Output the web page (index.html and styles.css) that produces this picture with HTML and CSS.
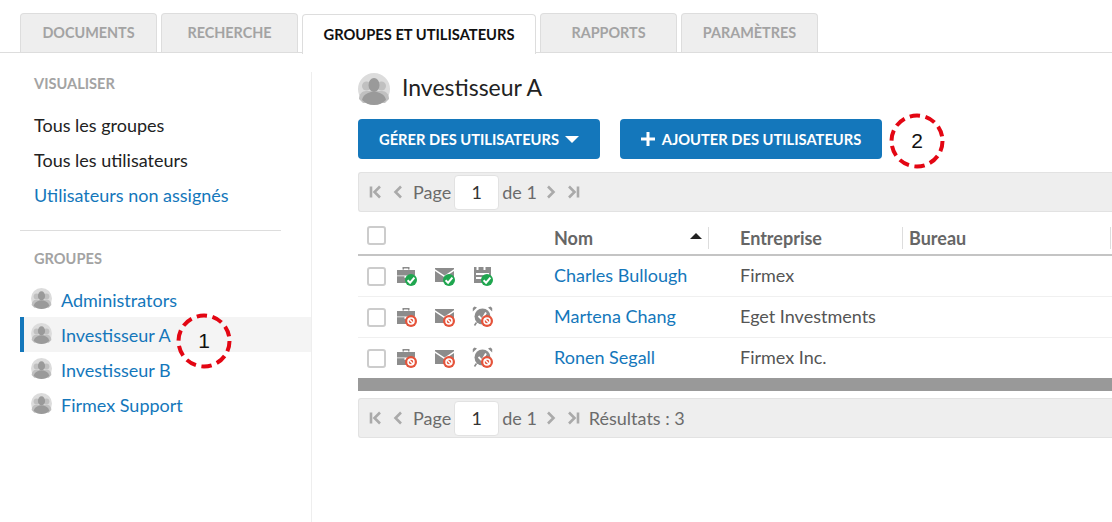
FILE: index.html
```html
<!DOCTYPE html>
<html lang="fr">
<head>
<meta charset="utf-8">
<title>Groupes et utilisateurs</title>
<link rel="stylesheet" href="styles.css">
</head>
<body>
<svg class="defs" width="0" height="0" aria-hidden="true">
  <defs>
    <symbol id="avatar" viewBox="0 0 32 32">
      <circle cx="16" cy="16" r="16" fill="#dcdcdc"/>
      <g fill="#c0c0c0">
        <circle cx="8.5" cy="13" r="4.5"/><circle cx="23.5" cy="13" r="4.5"/>
        <path d="M1 26c0-5 3-8 7-8h16c4 0 7 3 7 8l-4 4H5z"/>
      </g>
      <g fill="#9a9a9a">
        <ellipse cx="16" cy="12" rx="5.5" ry="7"/>
        <path d="M4 27c1-5 5-7 9-8h6c4 1 8 3 9 8-3 3-7 5-12 5s-9-2-12-5z"/>
      </g>
    </symbol>
    <symbol id="briefcase" viewBox="0 0 22 20">
      <path d="M6.500 4.500V2h7v2.500h-1.500V3.400H8v1.100z" fill="#8c8c8c"/>
      <path d="M1 5h18v5.500H1zM1 11.300h7.500v1.700h3v-1.700H19V18H1z" fill="#8c8c8c"/>
    </symbol>
    <symbol id="mail" viewBox="0 0 22 20">
      <path d="M1 3h19v1.200L10.500 10.500 1 4.200zM1 6l9.500 6.200L20 6v11H1z" fill="#8c8c8c"/>
    </symbol>
    <symbol id="calendar" viewBox="0 0 22 20">
      <path d="M2 2h2.500v3h2V2h5v3h2V2H19v16H2zM4 8v2h13V8zM4 12v2h8v-2z" fill="#8c8c8c" fill-rule="evenodd"/>
    </symbol>
    <symbol id="clock" viewBox="0 0 22 20">
      <circle cx="10.500" cy="10.500" r="8" fill="#8c8c8c"/>
      <path d="M.8 5.500 5 1.500 2.500.5.800 2zM20.200 5.500 16 1.500 18.500.5 20.200 2z" fill="#8c8c8c"/>
      <path d="M4.500 16.500 2.500 19.500M16.500 16.500l2 3" stroke="#8c8c8c" stroke-width="1.600"/>
      <path d="M6.500 10l3.500 3.500 4-7" fill="none" stroke="#fff" stroke-width="1.800"/>
    </symbol>
    <symbol id="ok" viewBox="0 0 12 12">
      <circle cx="6" cy="6" r="6" fill="#1fa64f"/>
      <path d="M2.600 6.200l2.500 2.500 4.300-5" fill="none" stroke="#fff" stroke-width="2"/>
    </symbol>
    <symbol id="no" viewBox="0 0 12 12">
      <circle cx="6" cy="6" r="6" fill="#e5533a"/>
      <circle cx="6" cy="6" r="3" fill="none" stroke="#fff" stroke-width="1.500"/>
      <path d="M3.800 3.800l4.400 4.400" stroke="#fff" stroke-width="1.500"/>
    </symbol>
  </defs>
</svg>

<nav class="tabs">
  <a class="tab">DOCUMENTS</a>
  <a class="tab">RECHERCHE</a>
  <a class="tab tab-active">GROUPES ET UTILISATEURS</a>
  <a class="tab">RAPPORTS</a>
  <a class="tab">PARAMÈTRES</a>
</nav>

<div class="layout">
  <aside class="sidebar">
    <h3 class="side-heading">VISUALISER</h3>
    <ul class="view-list">
      <li>Tous les groupes</li>
      <li>Tous les utilisateurs</li>
      <li class="link">Utilisateurs non assignés</li>
    </ul>
    <hr class="side-rule">
    <h3 class="side-heading groups-heading">GROUPES</h3>
    <ul class="group-list">
      <li class="group"><svg class="group-avatar"><use href="#avatar"/></svg>Administrators</li>
      <li class="group group-active"><svg class="group-avatar"><use href="#avatar"/></svg>Investisseur A</li>
      <li class="group"><svg class="group-avatar"><use href="#avatar"/></svg>Investisseur B</li>
      <li class="group"><svg class="group-avatar"><use href="#avatar"/></svg>Firmex Support</li>
    </ul>
  </aside>

  <main class="content">
    <header class="title-row">
      <svg class="title-avatar"><use href="#avatar"/></svg>
      <h1 class="title">Investisseur A</h1>
    </header>
    <div class="actions">
      <button class="btn btn-manage">GÉRER DES UTILISATEURS<span class="caret"></span></button>
      <button class="btn btn-add"><svg class="plus" viewBox="0 0 14 14"><path d="M5.500 0h3v5.500H14v3H8.500V14h-3V8.500H0v-3h5.500z" fill="#fff"/></svg>AJOUTER DES UTILISATEURS</button>
    </div>

    <div class="pager">
      <svg class="pg" viewBox="0 0 14 14"><path d="M2 1.500v11M11 1.500 5.500 7l5.500 5.500" fill="none" stroke="#aaa" stroke-width="2.600"/></svg>
      <svg class="pg" viewBox="0 0 14 14"><path d="M10 1.500 4.500 7l5.500 5.500" fill="none" stroke="#aaa" stroke-width="2.600"/></svg>
      <span class="pg-label">Page</span><span class="pg-input">1</span><span class="pg-of">de 1</span>
      <svg class="pg pg-next" viewBox="0 0 14 14"><path d="M4 1.500 9.500 7 4 12.500" fill="none" stroke="#aaa" stroke-width="2.600"/></svg>
      <svg class="pg" viewBox="0 0 14 14"><path d="M12 1.500v11M3 1.500 8.500 7 3 12.500" fill="none" stroke="#aaa" stroke-width="2.600"/></svg>
    </div>

    <div class="grid-head">
      <div class="cell-check"><span class="check"></span></div>
      <div class="head-cell head-nom">Nom<span class="sort"></span></div>
      <div class="head-cell head-ent">Entreprise</div>
      <div class="head-cell head-bur">Bureau</div>
    </div>

    <div class="row">
      <div class="cell-check"><span class="check"></span></div>
      <div class="status">
        <span class="st"><svg class="st-i"><use href="#briefcase"/></svg><svg class="st-b"><use href="#ok"/></svg></span>
        <span class="st"><svg class="st-i"><use href="#mail"/></svg><svg class="st-b"><use href="#ok"/></svg></span>
        <span class="st"><svg class="st-i"><use href="#calendar"/></svg><svg class="st-b"><use href="#ok"/></svg></span>
      </div>
      <div class="cell-name">Charles Bullough</div>
      <div class="cell-company">Firmex</div>
    </div>
    <div class="row">
      <div class="cell-check"><span class="check"></span></div>
      <div class="status">
        <span class="st"><svg class="st-i"><use href="#briefcase"/></svg><svg class="st-b"><use href="#no"/></svg></span>
        <span class="st"><svg class="st-i"><use href="#mail"/></svg><svg class="st-b"><use href="#no"/></svg></span>
        <span class="st"><svg class="st-i"><use href="#clock"/></svg><svg class="st-b"><use href="#no"/></svg></span>
      </div>
      <div class="cell-name">Martena Chang</div>
      <div class="cell-company">Eget Investments</div>
    </div>
    <div class="row">
      <div class="cell-check"><span class="check"></span></div>
      <div class="status">
        <span class="st"><svg class="st-i"><use href="#briefcase"/></svg><svg class="st-b"><use href="#no"/></svg></span>
        <span class="st"><svg class="st-i"><use href="#mail"/></svg><svg class="st-b"><use href="#no"/></svg></span>
        <span class="st"><svg class="st-i"><use href="#clock"/></svg><svg class="st-b"><use href="#no"/></svg></span>
      </div>
      <div class="cell-name">Ronen Segall</div>
      <div class="cell-company">Firmex Inc.</div>
    </div>
    <div class="scrollbar"></div>

    <div class="pager pager-bottom">
      <svg class="pg" viewBox="0 0 14 14"><path d="M2 1.500v11M11 1.500 5.500 7l5.500 5.500" fill="none" stroke="#aaa" stroke-width="2.600"/></svg>
      <svg class="pg" viewBox="0 0 14 14"><path d="M10 1.500 4.500 7l5.500 5.500" fill="none" stroke="#aaa" stroke-width="2.600"/></svg>
      <span class="pg-label">Page</span><span class="pg-input">1</span><span class="pg-of">de 1</span>
      <svg class="pg pg-next" viewBox="0 0 14 14"><path d="M4 1.500 9.500 7 4 12.500" fill="none" stroke="#aaa" stroke-width="2.600"/></svg>
      <svg class="pg" viewBox="0 0 14 14"><path d="M12 1.500v11M3 1.500 8.500 7 3 12.500" fill="none" stroke="#aaa" stroke-width="2.600"/></svg>
      <span class="pg-results">Résultats : 3</span>
    </div>
  </main>
</div>

<div class="callout callout-1"><svg class="ring" viewBox="0 0 56 56"><circle cx="28" cy="28" r="25.500" fill="none" stroke="#e30613" stroke-width="4" stroke-dasharray="10.500 5.500"/></svg><span>1</span></div>
<div class="callout callout-2"><svg class="ring" viewBox="0 0 56 56"><circle cx="28" cy="28" r="25.500" fill="none" stroke="#e30613" stroke-width="4" stroke-dasharray="10.500 5.500"/></svg><span>2</span></div>
</body>
</html>
```
FILE: styles.css
```css
* { box-sizing: border-box; }
html, body { margin: 0; padding: 0; }
body {
  position: relative;
  width: 1112px;
  height: 522px;
  overflow: hidden;
  background: #fff;
  font-family: Lato, "Liberation Sans", sans-serif;
  font-size: 18px;
  color: #222;
}
ul { list-style: none; margin: 0; padding: 0; }
.defs { position: absolute; }

.tabs {
  display: flex;
  gap: 4px;
  height: 53px;
  padding: 13px 0 0 20px;
  border-bottom: 1px solid #ddd;
}
.tab {
  width: 137px;
  height: 39px;
  padding-bottom: 2px;
  display: flex;
  align-items: center;
  justify-content: center;
  background: #eee;
  border: 1px solid #ddd;
  border-bottom: 0;
  border-radius: 4px 4px 0 0;
  color: #a3a3a3;
  font-size: 14.4px;
  font-weight: 700;
}
.tab-active {
  width: 234px;
  height: 40px;
  margin-top: 1px;
  background: #fff;
  color: #111;
  font-size: 14.7px;
}

.layout { display: flex; }
.sidebar {
  width: 312px;
  height: 450px;
  margin-top: 19px;
  padding-left: 20px;
  border-right: 1px solid #eee;
  flex: none;
}
.side-heading {
  margin: 0;
  padding: 3px 0 0 14px;
  font-size: 14.6px;
  line-height: 18px;
  font-weight: 700;
  color: #a3a3a3;
}
.view-list { margin-top: 15px; padding-left: 14px; }
.view-list li { height: 35px; line-height: 35px; color: #222; }
.view-list .link { color: #1477bb; }
.side-rule {
  width: 261px;
  margin: 17px 0 0;
  border: 0;
  border-top: 1px solid #ddd;
}
.groups-heading { padding-top: 19px; }
.group-list { margin-top: 14px; }
.group {
  height: 35px;
  display: flex;
  align-items: center;
  padding-left: 11px;
  color: #1477bb;
}
.group-active {
  background: #f4f4f4;
  border-left: 4px solid #1477bb;
  padding-left: 7px;
}
.group-avatar { width: 21px; height: 21px; margin-right: 9px; flex: none; margin-top: -3px; }

.content { flex: 1; padding: 20px 0 0 46px; min-width: 0; }
.title-row { display: flex; align-items: center; height: 32px; }
.title-avatar { width: 32px; height: 32px; margin-right: 12px; }
.title { margin: 0; padding-bottom: 4px; font-size: 23px; line-height: 28px; font-weight: 400; color: #222; }
.actions { display: flex; gap: 20px; margin-top: 14px; }
.btn {
  height: 40px;
  padding-bottom: 1px;
  border: 0;
  border-radius: 4px;
  background: #1477bb;
  color: #fff;
  font-family: inherit;
  font-size: 14.7px;
  font-weight: 700;
  display: flex;
  align-items: center;
  justify-content: center;
}
.btn-manage { width: 242px; }
.btn-add { width: 262px; }
.caret {
  margin-left: 6px;
  border-left: 7px solid transparent;
  border-right: 7px solid transparent;
  border-top: 7px solid #fff;
}
.plus { width: 14px; height: 14px; margin-right: 7px; }

.pager {
  display: flex;
  align-items: center;
  height: 40px;
  margin-top: 13px;
  padding-left: 9px;
  background: #eee;
  border: 1px solid #e2e2e2;
  border-right: 0;
  border-radius: 3px 0 0 3px;
  color: #6b6b6b;
}
.pg { width: 16px; height: 14px; flex: none; margin-right: 6px; }
.pg-label { margin-left: 1px; }
.pg-input {
  width: 45px;
  height: 35px;
  margin: 0 3px;
  display: flex;
  align-items: center;
  justify-content: center;
  background: #fff;
  border: 1px solid #e2e2e2;
  border-radius: 4px;
  color: #333;
}
.pg-next { margin-left: 6px; }
.pg-results { margin-left: 2px; }
.pager-bottom { margin-top: 7px; }

.grid-head {
  display: flex;
  align-items: center;
  height: 44px;
  border-bottom: 2px solid #c4c4c4;
}
.cell-check { width: 38px; flex: none; padding-left: 9px; display: flex; }
.check {
  width: 19px;
  height: 19px;
  background: #fff;
  border: 2px solid #ccc;
  border-radius: 3px;
}
.grid-head .check { margin-top: 4px; }
.head-cell {
  height: 22px;
  line-height: 22px;
  font-weight: 700;
  color: #666;
  margin-top: 10px;
  border-right: 1px solid #ddd;
  position: relative;
}
.head-nom { width: 155px; margin-left: 158px; }
.head-ent { width: 194px; padding-left: 31px; }
.head-bur { width: 208px; padding-left: 6px; }
.sort {
  position: absolute;
  right: 6px;
  top: 6px;
  border-left: 6px solid transparent;
  border-right: 6px solid transparent;
  border-bottom: 6px solid #222;
}

.row {
  display: flex;
  align-items: center;
  height: 41px;
  padding-bottom: 2px;
  border-bottom: 1px solid #f0f0f0;
  color: #555;
}
.row .cell-check { margin-top: 2px; }
.status { width: 158px; display: flex; gap: 16px; flex: none; }
.st { position: relative; width: 22px; height: 20px; display: block; }
.st-i { width: 22px; height: 20px; display: block; }
.st-b { position: absolute; right: 1px; bottom: -1px; width: 12px; height: 12px; }
.cell-name { width: 186px; color: #1477bb; }

.scrollbar { height: 13px; background: #999; margin-top: -1px; }

.callout {
  position: absolute;
  width: 56px;
  height: 56px;
  display: flex;
  align-items: center;
  justify-content: center;
  font-family: "Liberation Sans", sans-serif;
  font-size: 21px;
  color: #111;
}
.callout span { position: relative; }
.ring { position: absolute; inset: 0; }
.callout-1 { left: 176px; top: 313px; }
.callout-2 { left: 889px; top: 113px; }
```
